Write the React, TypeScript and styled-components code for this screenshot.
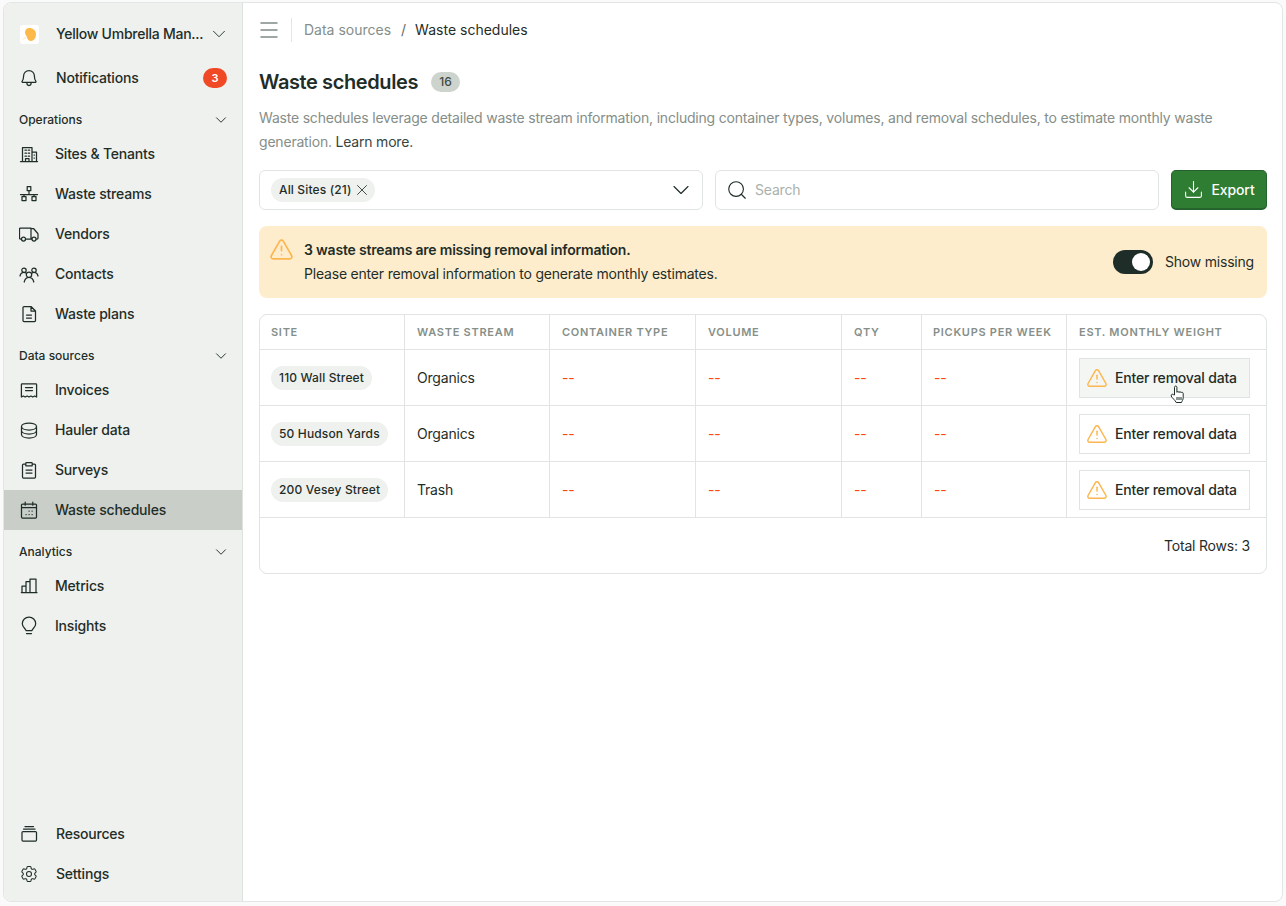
import * as React from "react";
import styled, { createGlobalStyle } from "styled-components";
import { ChevronDown, Download, Menu, Search, TriangleAlert, X } from "lucide-react";
import { HiOutlineCog6Tooth } from "react-icons/hi2";

const GlobalStyle = createGlobalStyle`
  * { box-sizing: border-box; }
  html, body { margin: 0; background: #fafafa; }
  body {
    font-family: Inter, "Liberation Sans", sans-serif;
    font-size: 14px;
    line-height: 20px;
    letter-spacing: -0.2px;
    color: #1f2d28;
  }
`;

const Icon = ({ d }: { d: string }) => (
  <SNavSvg viewBox="0 0 20 20" fill="none" stroke="currentColor" strokeWidth="1.25" strokeLinecap="round" strokeLinejoin="round">
    <path d={d} />
  </SNavSvg>
);

const paths = {
  bell: "M4.6 8a5.4 5.4 0 0 1 10.8 0c0 2.9.6 4.4 1.5 5.4.3.4 0 1-.5 1H3.6c-.5 0-.8-.6-.5-1 .9-1 1.5-2.5 1.5-5.4Z M7.8 14.6c0 3.9 4.4 3.9 4.4 0",
  sites: "M1.5 17.5h17 M3.5 17.5V3.5H13v14 M13 8h4.5v9.5 M6 6.2h1.4 M9.2 6.2h1.4 M6 9.2h1.4 M9.2 9.2h1.4 M6 12.2h1.4 M9.2 12.2h1.4 M6.5 17.5v-2.8H10v2.8 M15 11h.4 M15 14h.4",
  streams: "M8.2 2.5h3.6v4.2H8.2Z M10 6.7v3.8 M1.5 10.5h17 M5 10.500v2 M15 10.5v2 M3 12.5h4v4H3Z M13 12.5h4v4h-4Z",
  vendors: "M2.5 15h-1a1 1 0 0 1-1-1V5a1 1 0 0 1 1-1H12v11H6.5 M12 15h1 M12 7V4.5h2.500L18.8 9.5a1 1 0 0 1 .2.6V14a1 1 0 0 1-1 1h-.5 M4.5 13a2 2 0 1 0 0 4 2 2 0 0 0 0-4Z M15 13a2 2 0 1 0 0 4 2 2 0 0 0 0-4Z",
  contacts: "M10 8a2.7 2.7 0 1 0 0 5.400A2.700 2.700 0 0 0 10 8Z M5.200 18c.7-2.700 2.600-4.600 4.800-4.600s4.100 1.900 4.800 4.600 M5 4a2.200 2.200 0 1 0 0 4.400A2.200 2.200 0 0 0 5 4Z M15 4a2.200 2.200 0 1 0 0 4.400A2.200 2.200 0 0 0 15 4Z M1 12c.5-2.200 2-3.600 4-3.600.8 0 1.500.2 2 .6 M19 12c-.5-2.200-2-3.600-4-3.600-.8 0-1.500.2-2 .6",
  doc: "M5 2.500h7l4.500 4.500v9.500a1 1 0 0 1-1 1H5a1 1 0 0 1-1-1v-13a1 1 0 0 1 1-1Z M12 2.500V7h4.500 M7.500 11h5 M7.500 14h5",
  invoice: "M3.200 3.800h13.600a.8.8 0 0 1 .8.8V17l-1.900-1-1.900 1-1.900-1-1.900 1-1.900-1-1.900 1-1.900-1-1.900 1V4.600a.8.8 0 0 1 .8-.8Z M6.500 7.500h7 M6.500 10.500h7",
  database: "M10 3c-4.200 0-7.500 1.500-7.500 3.500S5.800 10 10 10s7.500-1.500 7.500-3.500S14.200 3 10 3Z M2.500 6.500v4c0 2 3.300 3.500 7.500 3.500s7.500-1.500 7.500-3.500v-4 M2.500 10.500v4c0 2 3.300 3.500 7.500 3.500s7.500-1.500 7.500-3.500v-4",
  survey: "M6.800 4H4.500a1 1 0 0 0-1 1v12a1 1 0 0 0 1 1h11a1 1 0 0 0 1-1V5a1 1 0 0 0-1-1h-2.300 M7.500 2.500h5a.7.7 0 0 1 .7.7v2.600H6.800V3.200a.7.7 0 0 1 .7-.7Z M7 10h6 M7 13h6",
  calendar: "M3.500 4h13a1 1 0 0 1 1 1v12a1 1 0 0 1-1 1h-13a1 1 0 0 1-1-1V5a1 1 0 0 1 1-1Z M2.500 7.500h15 M6.200 2.200v3 M13.800 2.200v3 M10 11h.2 M13 11h.2 M7 14.500h.2 M10 14.500h.2 M13 14.500h.2",
  metrics: "M2.300 16.500H18 M3 16.500V10h4v6.500 M7 16.500V5.700h4v10.800 M11 16.500V3h6v13.500",
  bulb: "M7 14.500c0-1.700-3.700-3-3.700-6.700a6.700 6.700 0 0 1 13.400 0c0 3.700-3.700 5-3.700 6.700Z M7.500 17.500h5",
  resources: "M4 7.500h12.500a1 1 0 0 1 1 1v7.500a1 1 0 0 1-1 1H4a1 1 0 0 1-1-1V8.500a1 1 0 0 1 1-1Z M4.500 5H16 M6 2.500h8.500",
};

const sections = [
  {
    title: "Operations",
    items: [
      { label: "Sites & Tenants", d: paths.sites },
      { label: "Waste streams", d: paths.streams },
      { label: "Vendors", d: paths.vendors },
      { label: "Contacts", d: paths.contacts },
      { label: "Waste plans", d: paths.doc },
    ],
  },
  {
    title: "Data sources",
    items: [
      { label: "Invoices", d: paths.invoice },
      { label: "Hauler data", d: paths.database },
      { label: "Surveys", d: paths.survey },
      { label: "Waste schedules", d: paths.calendar, active: true },
    ],
  },
  {
    title: "Analytics",
    items: [
      { label: "Metrics", d: paths.metrics },
      { label: "Insights", d: paths.bulb },
    ],
  },
];

const columns = ["Site", "Waste stream", "Container type", "Volume", "Qty", "Pickups per week", "Est. monthly weight"];

const rows = [
  { site: "110 Wall Street", stream: "Organics", hover: true },
  { site: "50 Hudson Yards", stream: "Organics" },
  { site: "200 Vesey Street", stream: "Trash" },
];

const App = () => {
  return (
    <>
      <GlobalStyle />
      <SFrame>
        <SSidebar>
          <SBrand>
            <SLogo viewBox="0 0 19 19">
              <rect width="19" height="19" rx="3" fill="#fff" />
              <path d="M8.500 3c3.800-.5 7.500 2 7.500 6 0 3.800-2.200 7-5 7-2.200 0-3.400-1.600-4-3.600-.5-1.800-2-2.800-2-4.800 0-2.200 1.400-4.300 3.500-4.600Z" fill="#fdb94a" />
              <path d="M2.500 14.500c1-1.200 2-1.500 3.500-1.500" stroke="#fde7bd" fill="none" />
            </SLogo>
            <SBrandName>Yellow Umbrella Man...</SBrandName>
            <ChevronDown size={22} strokeWidth={1} />
          </SBrand>
          <SNavItem $wide>
            <Icon d={paths.bell} />
            Notifications
            <SCount>3</SCount>
          </SNavItem>
          {sections.map((section) => (
            <React.Fragment key={section.title}>
              <SSectionHead>
                {section.title}
                <ChevronDown size={18} strokeWidth={1.25} />
              </SSectionHead>
              {section.items.map((item) => (
                <SNavItem key={item.label} $active={item.active}>
                  <Icon d={item.d} />
                  {item.label}
                </SNavItem>
              ))}
            </React.Fragment>
          ))}
          <SSidebarFoot>
            <SNavItem $wide>
              <Icon d={paths.resources} />
              Resources
            </SNavItem>
            <SNavItem $wide>
              <HiOutlineCog6Tooth size={20} strokeWidth={1.25} />
              Settings
            </SNavItem>
          </SSidebarFoot>
        </SSidebar>

        <SMain>
          <STopBar>
            <SMenuIcon>
              <Menu size={24} strokeWidth={1.5} />
            </SMenuIcon>
            <SCrumbMuted>Data sources</SCrumbMuted>
            <SCrumbSep>/</SCrumbSep>
            <SCrumb>Waste schedules</SCrumb>
          </STopBar>

          <SContent>
            <STitleRow>
              <STitle>Waste schedules</STitle>
              <STitleCount>16</STitleCount>
            </STitleRow>
            <SDescription>
              Waste schedules leverage detailed waste stream information, including container types, volumes, and removal
              schedules, to estimate monthly waste generation. <SLearn>Learn more.</SLearn>
            </SDescription>

            <SFilters>
              <SSelect>
                <SFilterChip>
                  All Sites (21)
                  <X size={18} strokeWidth={1.1} />
                </SFilterChip>
                <ChevronDown size={28} strokeWidth={1} />
              </SSelect>
              <SSearch>
                <Search size={22} strokeWidth={1.25} />
                <SPlaceholder>Search</SPlaceholder>
              </SSearch>
              <SExport>
                <Download size={21} strokeWidth={1.25} />
                Export
              </SExport>
            </SFilters>

            <SAlert>
              <TriangleAlert size={25} strokeWidth={1.6} color="#fdb64f" />
              <SAlertText>
                <strong>3 waste streams are missing removal information.</strong>
                <span>Please enter removal information to generate monthly estimates.</span>
              </SAlertText>
              <SToggleWrap>
                <SToggle />
                Show missing
              </SToggleWrap>
            </SAlert>

            <STableCard>
              <SGrid>
                {columns.map((col) => (
                  <SHeadCell key={col}>{col}</SHeadCell>
                ))}
                {rows.map((row) => (
                  <React.Fragment key={row.site}>
                    <SCell>
                      <SSiteChip>{row.site}</SSiteChip>
                    </SCell>
                    <SCell>{row.stream}</SCell>
                    <SCell><SDash>--</SDash></SCell>
                    <SCell><SDash>--</SDash></SCell>
                    <SCell><SDash>--</SDash></SCell>
                    <SCell><SDash>--</SDash></SCell>
                    <SCell>
                      <SRemovalButton $hover={row.hover}>
                        <TriangleAlert size={22} strokeWidth={1.6} color="#fdb64f" />
                        Enter removal data
                        {row.hover && (
                          <SCursor viewBox="0 0 16 19">
                            <path
                              d="M4.500 10V2.300c0-1.700 2.400-1.700 2.400 0v5c0-1 2-1 2.100.2 0-1 2-1 2.100.3 0-.8 2-.8 2.100.6v4.300c0 2.200-1.200 3.200-1.700 4.800H6.200C5.500 15.500 1.800 12.700 1.200 11c-.5-1.500 1.400-2.400 2.300-1.300Z"
                              fill="#fff"
                              stroke="#1f2d28"
                              strokeWidth="1"
                              strokeLinejoin="round"
                            />
                            <path d="M7 12v3 M9 12v3 M11 12v3" stroke="#1f2d28" strokeWidth="1" />
                          </SCursor>
                        )}
                      </SRemovalButton>
                    </SCell>
                  </React.Fragment>
                ))}
              </SGrid>
              <STableFoot>Total Rows: 3</STableFoot>
            </STableCard>
          </SContent>
        </SMain>
      </SFrame>
    </>
  );
};

export default App;

const SFrame = styled.div`
  display: flex;
  height: 900px;
  margin: 2px 3px;
  background: #fff;
  border: 1px solid #e2e6e4;
  border-radius: 8px;
  overflow: hidden;
`;

const SSidebar = styled.aside`
  display: flex;
  flex-direction: column;
  flex: 0 0 239px;
  padding: 11px 0 7px;
  background: #eff1ee;
  border-right: 1px solid #dde2df;
`;

const SNavSvg = styled.svg`
  flex: none;
  width: 20px;
  height: 20px;
`;

const SBrand = styled.div`
  display: flex;
  align-items: center;
  height: 40px;
  margin-bottom: 4px;
  padding: 0 12px 0 16px;
  font-weight: 500;
  letter-spacing: -0.25px;
`;

const SLogo = styled.svg`
  flex: none;
  width: 19px;
  height: 19px;
  margin-right: 17px;
`;

const SBrandName = styled.span`
  flex: 1;
  white-space: nowrap;
`;

const SNavItem = styled.div<{ $active?: boolean; $wide?: boolean }>`
  display: flex;
  align-items: center;
  gap: ${(p) => (p.$wide ? "17px" : "16px")};
  flex: none;
  height: 40px;
  padding: 0 15px;
  font-weight: 500;
  color: #1f2d28;
  background: ${(p) => (p.$active ? "#c9cfc8" : "transparent")};

  svg {
    flex: none;
  }
`;

const SCount = styled.span`
  display: flex;
  align-items: center;
  justify-content: center;
  width: 24px;
  height: 20px;
  margin-left: auto;
  border-radius: 10px;
  background: #ef4a25;
  color: #fff;
  font-size: 11px;
  font-weight: 600;
  letter-spacing: 0;
`;

const SSectionHead = styled.div`
  display: flex;
  align-items: center;
  justify-content: space-between;
  flex: none;
  height: 36px;
  padding: 8px 12px 0 15px;
  font-size: 12px;
  line-height: 16px;
  font-weight: 500;
  letter-spacing: 0;
`;

const SSidebarFoot = styled.div`
  margin-top: auto;
`;

const SMain = styled.main`
  display: flex;
  flex-direction: column;
  flex: 1;
  min-width: 0;
`;

const STopBar = styled.header`
  display: flex;
  align-items: center;
  flex: none;
  height: 54px;
  padding: 0 14px;
  letter-spacing: 0;
`;

const SMenuIcon = styled.span`
  display: flex;
  align-items: center;
  height: 24px;
  margin-right: 12px;
  padding-right: 10px;
  color: #7f8b85;
  border-right: 1px solid #e2e6e4;
`;

const SCrumbMuted = styled.span`
  color: #858e88;
`;

const SCrumbSep = styled.span`
  margin: 0 9px 0 10px;
  color: #5f6b65;
`;

const SCrumb = styled.span`
  color: #1f2d28;
`;

const SContent = styled.div`
  display: flex;
  flex-direction: column;
  padding: 0 15px 0 16px;
`;

const STitleRow = styled.div`
  display: flex;
  align-items: center;
  gap: 13px;
  height: 24px;
  margin-top: 13px;
`;

const STitle = styled.h1`
  margin: 0;
  font-size: 20px;
  line-height: 24px;
  font-weight: 600;
  letter-spacing: -0.4px;
`;

const STitleCount = styled.span`
  display: flex;
  align-items: center;
  justify-content: center;
  width: 29px;
  height: 20px;
  border-radius: 10px;
  background: #cdd3cd;
  color: #3d4a44;
  font-size: 12px;
  font-weight: 500;
  letter-spacing: 0;
`;

const SDescription = styled.p`
  margin: 12px 0 0;
  line-height: 24px;
  color: #858e88;
`;

const SLearn = styled.span`
  color: #38453f;
`;

const SFilters = styled.div`
  display: grid;
  grid-template-columns: 444px 444px 96px;
  gap: 12px;
  margin-top: 16px;
`;

const SSelect = styled.div`
  display: flex;
  align-items: center;
  justify-content: space-between;
  height: 40px;
  padding: 0 7px 0 11px;
  border: 1px solid #e0e4e2;
  border-radius: 6px;
`;

const SFilterChip = styled.span`
  display: inline-flex;
  align-items: center;
  gap: 1px;
  height: 24px;
  padding: 0 4px 0 8px;
  border-radius: 12px;
  background: #eff1ee;
  font-size: 12px;
  font-weight: 500;
  letter-spacing: 0.15px;
`;

const SSearch = styled.div`
  display: flex;
  align-items: center;
  gap: 7px;
  height: 40px;
  padding: 0 10px;
  border: 1px solid #e0e4e2;
  border-radius: 6px;
`;

const SPlaceholder = styled.span`
  color: #aab1ac;
`;

const SExport = styled.button`
  display: flex;
  align-items: center;
  justify-content: center;
  gap: 7px;
  height: 40px;
  padding: 0;
  border: 1px solid #26622b;
  border-bottom-width: 2px;
  border-radius: 5px;
  background: #2f7d32;
  color: #fff;
  font: 500 14px/20px Inter, "Liberation Sans", sans-serif;
  letter-spacing: -0.1px;
`;

const SAlert = styled.div`
  display: flex;
  align-items: center;
  gap: 10px;
  margin-top: 16px;
  padding: 12px 13px 12px 10px;
  border-radius: 8px;
  background: #feedcd;

  > svg {
    align-self: flex-start;
    margin-top: -1px;
  }
`;

const SAlertText = styled.div`
  display: flex;
  flex-direction: column;
  flex: 1;
  line-height: 24px;

  strong {
    font-weight: 600;
  }
`;

const SToggleWrap = styled.div`
  display: flex;
  align-items: center;
  gap: 12px;
`;

const SToggle = styled.span`
  position: relative;
  width: 40px;
  height: 24px;
  border-radius: 12px;
  background: #1f2d28;

  &::after {
    content: "";
    position: absolute;
    top: 3px;
    right: 3px;
    width: 18px;
    height: 18px;
    border-radius: 50%;
    background: #fff;
  }
`;

const STableCard = styled.section`
  margin-top: 16px;
  border: 1px solid #e0e4e2;
  border-radius: 8px;
  overflow: hidden;
`;

const SGrid = styled.div`
  display: grid;
  grid-template-columns: 145px 145px 146px 146px 80px 145px 200px;
  grid-template-rows: 35px repeat(3, 56px);
`;

const SHeadCell = styled.div`
  display: flex;
  align-items: center;
  padding-left: 12px;
  border-right: 1px solid #e0e4e2;
  border-bottom: 1px solid #e0e4e2;
  font-size: 11px;
  font-weight: 600;
  letter-spacing: 0.72px;
  text-transform: uppercase;
  white-space: nowrap;
  color: #868f89;

  &:first-child,
  &:nth-child(6) {
    padding-left: 11px;
  }
  &:nth-child(7) {
    border-right: 0;
  }
`;

const SCell = styled.div`
  display: flex;
  align-items: center;
  padding-left: 12px;
  border-right: 1px solid #e0e4e2;
  border-bottom: 1px solid #e0e4e2;

  &:nth-child(7n + 1) {
    padding-left: 11px;
  }
  &:nth-child(7n) {
    border-right: 0;
  }
`;

const SSiteChip = styled.span`
  display: inline-flex;
  align-items: center;
  height: 24px;
  padding: 0 8px;
  border-radius: 12px;
  background: #eff1ee;
  font-size: 12px;
  font-weight: 500;
  letter-spacing: 0.15px;
  white-space: nowrap;
`;

const SDash = styled.span`
  color: #ff4516;
`;

const SRemovalButton = styled.div<{ $hover?: boolean }>`
  position: relative;
  display: flex;
  align-items: center;
  gap: 7px;
  width: 171px;
  height: 40px;
  padding-left: 6px;
  border: 1px solid #dfe4e2;
  background: ${(p) => (p.$hover ? "#f4f6f3" : "#fff")};
  font-weight: 500;
  white-space: nowrap;
`;

const SCursor = styled.svg`
  position: absolute;
  left: 90px;
  top: 26px;
  width: 16px;
  height: 19px;
`;

const STableFoot = styled.footer`
  display: flex;
  align-items: center;
  justify-content: flex-end;
  height: 55px;
  padding-right: 16px;
`;
